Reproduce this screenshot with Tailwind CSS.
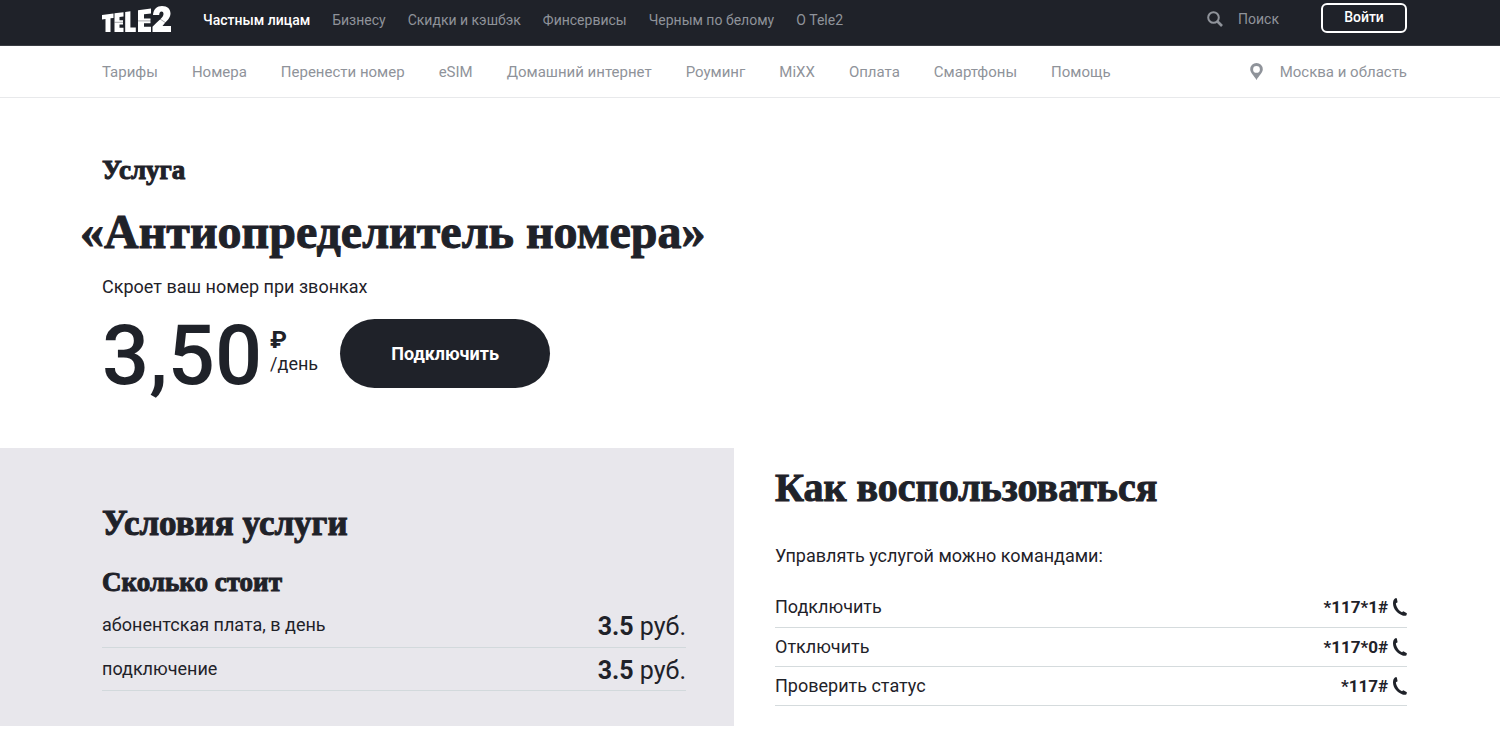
<!DOCTYPE html>
<html lang="ru">
<head>
<meta charset="utf-8">
<meta name="viewport" content="width=device-width, initial-scale=1">
<title>Услуга «Антиопределитель номера» — Tele2</title>
<script src="https://cdn.jsdelivr.net/npm/@tailwindcss/browser@4"></script>
</head>
<body class="min-h-screen bg-white text-[#1f2229] font-['Roboto',sans-serif] text-[18px] leading-6">
<svg class="hidden" aria-hidden="true">
  <symbol id="phone" viewBox="0 0 14 18"><path d="M2.200.2 3.800.2 4.600 4.300 2.900 5.200C3.200 9 5.600 12.600 9 14.300L10.300 13.300 13.900 15.200 13.500 17.200C12.500 17.900 11 17.900 9.500 17.400 4.200 15.700.2 11 0 5.500 0 3 .7 1.200 2.200.2Z" fill="currentColor"/></symbol>
</svg>

<header class="flex h-[46px] items-start border-b border-[#3a3d43] bg-[#1f2229] pl-[102px] pr-[93px] text-[14px] leading-6 text-[#8f939a]">
  <a href="#" aria-label="Tele2" class="mt-[6px] mr-8 shrink-0">
    <svg width="69" height="27" viewBox="0 0 69 27" fill="#fff">
      <path d="M0 9 11.500 7.500V12L8.500 12.300V26H3.500V13L0 13.500Z"/>
      <path d="M12.500 7.300 21.500 6.200V10.600L17.500 11V14.200H21V18.400H17.500V21.700H21.500V26H12.500Z"/>
      <path d="M23.200 6 28.400 5.300V21.400H33.800V26H23.200Z"/>
      <path d="M36 4.200 49 2.600V7.500L42 8.300V12.500H48.500V17.300H42V20.800H49V26H36Z"/>
      <path d="M51 9C51.500 3 55 0 60 0 65.500 0 68.500 3 68.500 7.500 68.500 12 65 14.500 60.500 20H69V26H50.500V20.800C56 15 61.500 11.500 61.500 8 61.500 6.300 60.700 5.500 59.500 5.500 58 5.500 57.300 6.700 57.200 9Z"/>
      <path d="M12.500 16.300H21M36 14.900H49M58 13 64 17" fill="none" stroke="#1f2229" stroke-width=".4"/>
    </svg>
  </a>
  <nav aria-label="Разделы" class="flex gap-[22px] whitespace-nowrap pt-2">
    <a href="#" class="font-medium text-white">Частным лицам</a>
    <a href="#">Бизнесу</a>
    <a href="#">Скидки и кэшбэк</a>
    <a href="#">Финсервисы</a>
    <a href="#">Черным по белому</a>
    <a href="#">О Tele2</a>
  </nav>
  <div class="ml-auto flex items-start">
    <button type="button" class="flex items-center gap-[15px] pt-[7px]">
      <svg width="16" height="16" viewBox="0 0 16 16" fill="none" stroke="currentColor"><circle cx="6.500" cy="6.500" r="5.300" stroke-width="2"/><path d="M10.500 10.500 15 15" stroke-width="2.600"/></svg>
      Поиск
    </button>
    <button type="button" class="mt-[3px] ml-[42px] h-[30px] w-[86px] rounded-md border-2 border-white pb-1 font-medium leading-6 text-white">Войти</button>
  </div>
</header>

<div class="flex h-[52px] items-center justify-between border-b border-[#e8e9eb] pl-[102px] pr-[93px] text-[15px] text-[#8f939a] whitespace-nowrap">
  <nav aria-label="Меню" class="flex gap-[34px]">
    <a href="#">Тарифы</a>
    <a href="#">Номера</a>
    <a href="#">Перенести номер</a>
    <a href="#">eSIM</a>
    <a href="#">Домашний интернет</a>
    <a href="#">Роуминг</a>
    <a href="#">MiXX</a>
    <a href="#">Оплата</a>
    <a href="#">Смартфоны</a>
    <a href="#">Помощь</a>
  </nav>
  <button type="button" class="flex items-center gap-[17px]">
    <svg width="13" height="17" viewBox="0 0 13 17" fill="currentColor"><path fill-rule="evenodd" d="M6.500 0A6.300 6.300 0 0 1 12.800 6.300C12.800 10 9 12.500 6.500 17 4 12.500.2 10 .2 6.300A6.300 6.300 0 0 1 6.500 0ZM6.500 3A3.400 3.400 0 1 0 6.500 9.800 3.400 3.400 0 0 0 6.500 3Z"/></svg>
    Москва и область
  </button>
</div>

<main>
  <section class="px-[102px] pt-14 pb-[60px]">
    <h1 class="font-['Liberation_Serif',serif] font-bold [-webkit-text-stroke:1px]">
      <span class="block text-[27px] leading-8">Услуга</span>
      <span class="-ml-[22px] mt-[18px] block text-[48px] leading-[56px]">«Антиопределитель номера»</span>
    </h1>
    <p class="mt-[15px]">Скроет ваш номер при звонках</p>
    <div class="mt-[20px] flex items-center">
      <span class="pt-1 text-[83px] leading-[64px] font-medium">3,50</span>
      <span class="ml-2 flex flex-col pb-1"><b class="text-[24px] leading-6">₽</b><span class="leading-6">/день</span></span>
      <button type="button" class="ml-[22px] h-[69px] w-[210px] rounded-full bg-[#1f2229] font-bold text-white">Подключить</button>
    </div>
  </section>

  <div class="grid grid-cols-[734fr_766fr]">
    <section class="bg-[#e8e7ec] pt-14 pr-12 pb-[35px] pl-[102px]">
      <h2 class="font-['Liberation_Serif',serif] text-[35px] leading-10 font-bold [-webkit-text-stroke:1px]">Условия услуги</h2>
      <h3 class="mt-[22px] font-['Liberation_Serif',serif] text-[27px] leading-8 font-bold [-webkit-text-stroke:1px]">Сколько стоит</h3>
      <table class="mt-[6px] w-full">
        <tbody>
          <tr class="h-[43px] border-b border-[#d2d9dc]"><th scope="row" class="text-left font-normal">абонентская плата, в день</th><td class="pt-1 text-right text-[25px] leading-8"><b>3.5</b> руб.</td></tr>
          <tr class="h-[43px] border-b border-[#d2d9dc]"><th scope="row" class="text-left font-normal">подключение</th><td class="pt-1 text-right text-[25px] leading-8"><b>3.5</b> руб.</td></tr>
        </tbody>
      </table>
    </section>
    <section class="pt-[18px] pr-[93px] pl-[41px]">
      <h2 class="font-['Liberation_Serif',serif] text-[40px] leading-[44px] font-bold [-webkit-text-stroke:1px]">Как воспользоваться</h2>
      <p class="mt-[34px]">Управлять услугой можно командами:</p>
      <table class="mt-5 w-full">
        <tbody>
          <tr class="h-[39px] border-b border-[#d5dbdd]"><th scope="row" class="text-left font-normal">Подключить</th><td class="text-[17px] font-bold"><a href="tel:*117*1%23" class="flex items-center justify-end gap-[5px]">*117*1#<svg width="14" height="18"><use href="#phone"/></svg></a></td></tr>
          <tr class="h-[39px] border-b border-[#d5dbdd]"><th scope="row" class="text-left font-normal">Отключить</th><td class="text-[17px] font-bold"><a href="tel:*117*0%23" class="flex items-center justify-end gap-[5px]">*117*0#<svg width="14" height="18"><use href="#phone"/></svg></a></td></tr>
          <tr class="h-[39px] border-b border-[#d5dbdd]"><th scope="row" class="text-left font-normal">Проверить статус</th><td class="text-[17px] font-bold"><a href="tel:*117%23" class="flex items-center justify-end gap-[5px]">*117#<svg width="14" height="18"><use href="#phone"/></svg></a></td></tr>
        </tbody>
      </table>
    </section>
  </div>
</main>
</body>
</html>
